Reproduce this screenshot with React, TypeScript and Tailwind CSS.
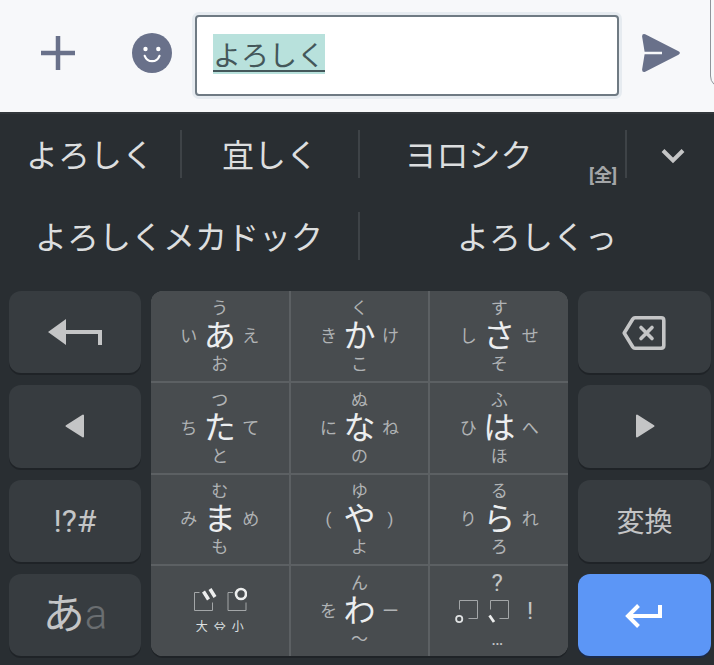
import React, { useEffect, useRef, useState } from 'react';

interface FlickKey {
  main: string;
  up: string;
  left: string;
  right: string;
  down: string;
}

const flickKeys: FlickKey[] = [
  { main: 'あ', up: 'う', left: 'い', right: 'え', down: 'お' },
  { main: 'か', up: 'く', left: 'き', right: 'け', down: 'こ' },
  { main: 'さ', up: 'す', left: 'し', right: 'せ', down: 'そ' },
  { main: 'た', up: 'つ', left: 'ち', right: 'て', down: 'と' },
  { main: 'な', up: 'ぬ', left: 'に', right: 'ね', down: 'の' },
  { main: 'は', up: 'ふ', left: 'ひ', right: 'へ', down: 'ほ' },
  { main: 'ま', up: 'む', left: 'み', right: 'め', down: 'も' },
  { main: 'や', up: 'ゆ', left: '(', right: ')', down: 'よ' },
  { main: 'ら', up: 'る', left: 'り', right: 'れ', down: 'ろ' }
];

const waKey: FlickKey = { main: 'わ', up: 'ん', left: 'を', right: 'ー', down: '〜' };

const cellClass = 'flex items-center justify-center bg-[#484c4f] active:bg-[#55595c]';

const FlickButton: React.FC<{ item: FlickKey }> = ({ item }) => (
  <button type="button" className={cellClass}>
    <span className="grid grid-cols-[26px_36px_26px] grid-rows-[20px_36px_20px] place-items-center text-[17px] leading-5 text-[#b0b3b5]">
      <span className="col-start-2">{item.up}</span>
      <span className="col-start-1 row-start-2">{item.left}</span>
      <span className="row-start-2 text-[32px] leading-9 text-[#eceeef]">{item.main}</span>
      <span className="row-start-2">{item.right}</span>
      <span className="col-start-2 row-start-3">{item.down}</span>
    </span>
  </button>
);

interface SideKeyProps {
  label: string;
  primary?: boolean;
  children: React.ReactNode;
}

const SideKey: React.FC<SideKeyProps> = ({ label, primary, children }) => (
  <button
    type="button"
    aria-label={label}
    className={`flex items-center justify-center rounded-xl ${
      primary
        ? 'bg-[#5c96f6] text-white shadow-[0_2px_0_#1b2b4b]'
        : 'bg-[#373c40] text-[#c4c5c6] shadow-[0_2px_0_#1f2327]'
    }`}
  >
    {children}
  </button>
);

const Divider = () => <span className="h-12 w-0.5 shrink-0 bg-[#3e4347]" />;

const App: React.FC = () => {
  const [message, setMessage] = useState('よろしく');
  const inputRef = useRef<HTMLInputElement>(null);

  // the composing text starts out selected
  useEffect(() => {
    inputRef.current?.focus();
    inputRef.current?.select();
  }, []);

  return (
    <div className="flex min-h-screen flex-col bg-[#292e32] font-['Roboto','Noto_Sans_CJK_JP',sans-serif]">
      <header className="flex h-28 items-start bg-[#f7f8fa] text-[#69718a]">
        <div className="flex flex-1 items-center pt-[15px] pl-10">
          <button type="button" aria-label="追加" className="shrink-0 pb-1.5">
            <svg width="36" height="36" viewBox="0 0 36 36" fill="none" stroke="currentColor" strokeWidth="4.500">
              <path d="M18 1v34M1 18h34" />
            </svg>
          </button>
          <button type="button" aria-label="絵文字" className="ml-14 shrink-0 pb-1.5">
            <svg width="40" height="40" viewBox="0 0 40 40">
              <circle cx="20" cy="20" r="20" fill="currentColor" />
              <circle cx="13.500" cy="16" r="2.200" fill="#fff" />
              <circle cx="26.300" cy="16" r="2.200" fill="#fff" />
              <path d="M12.700 22.800c2.800 7.200 12 7.200 14.800 0" fill="none" stroke="#fff" strokeWidth="2.200" strokeLinecap="round" />
            </svg>
          </button>
          <input
            ref={inputRef}
            type="text"
            aria-label="メッセージ"
            value={message}
            onChange={(e) => setMessage(e.target.value)}
            className="ml-[23px] h-[81px] min-w-0 flex-1 rounded border-2 border-[#6f7a83] bg-white px-4 pb-1 text-[28px] leading-[34px] text-[#44575a] underline decoration-2 underline-offset-4 outline-none ring-3 ring-[#e6ebf0] selection:bg-[#b8e1dc] selection:text-[#44575a]"
          />
          <button type="button" aria-label="送信" className="mr-[30px] ml-[23px] shrink-0 pb-1.5">
            <svg width="38" height="38" viewBox="0 0 38 38" fill="currentColor">
              <path d="M3.200.3 36.500 17.300q2.800 1.700 0 3.400L3.200 37.700Q0 38.600.1 35.500L2.600 20.200H20v-2.400H2.600L.1 2.500Q0-.6 3.200.3z" />
            </svg>
          </button>
        </div>
        <div className="-mt-3 h-[100px] w-1 shrink-0 overflow-hidden">
          <div className="h-full w-6 rounded-xl border border-[#8f949a]" />
        </div>
      </header>

      <section className="border-t-2 border-[#32373b] text-[32px] leading-10 text-[#dcdedf]">
        <div className="grid h-20 grid-cols-[182fr_178fr_267fr_87fr]">
          <div className="flex items-center">
            <button type="button" className="flex-1 pt-1">よろしく</button>
            <Divider />
          </div>
          <div className="flex items-center">
            <button type="button" className="flex-1 pt-1">宜しく</button>
            <Divider />
          </div>
          <div className="flex items-center">
            <button type="button" className="flex h-full flex-1 items-center">
              <span className="flex-1 pt-1 pr-3">ヨロシク</span>
              <span className="self-end pr-2 pb-2 text-lg leading-5 font-bold text-[#a4a6a8]">[全]</span>
            </button>
            <Divider />
          </div>
          <button type="button" aria-label="候補を開く" className="flex items-center justify-center pt-1 pl-1">
            <svg width="24" height="16" viewBox="0 0 24 16" fill="none" stroke="#c4c5c6" strokeWidth="4">
              <path d="M2 2.500 12 12.500 22 2.500" />
            </svg>
          </button>
        </div>
        <div className="grid h-[83px] grid-cols-[360fr_354fr]">
          <div className="flex items-center">
            <button type="button" className="flex-1 pt-1">よろしくメカドック</button>
            <Divider />
          </div>
          <button type="button" className="pt-1">よろしくっ</button>
        </div>
      </section>

      <main className="grid flex-1 grid-cols-[132fr_417fr_133fr] gap-[10px] pt-[14px] pr-[3px] pb-[9px] pl-[9px]">
        <div className="grid grid-rows-4 gap-3">
          <SideKey label="戻す">
            <svg width="54" height="28" viewBox="0 0 54 28" fill="currentColor">
              <path d="M0 14 18 1v11h36v15h-4V16H18v11z" />
            </svg>
          </SideKey>
          <SideKey label="左へ">
            <svg width="20" height="24" viewBox="0 0 20 24" fill="currentColor" stroke="currentColor" strokeWidth="2" strokeLinejoin="round">
              <path d="M1.500 12 18 1.500v21z" />
            </svg>
          </SideKey>
          <SideKey label="記号">
            <span className="text-[32px] leading-9">!?#</span>
          </SideKey>
          <SideKey label="文字切替">
            <span className="text-[42px] leading-[44px]">あ</span>
            <span className="text-[42px] leading-[44px] font-light text-[#6a6e71]">a</span>
          </SideKey>
        </div>

        <div className="grid grid-cols-3 grid-rows-4 gap-0.5 overflow-hidden rounded-xl bg-[#5c6063] shadow-[0_2px_0_#1f2327]">
          {flickKeys.map((item) => (
            <FlickButton key={item.main} item={item} />
          ))}

          <button type="button" className={`${cellClass} flex-col`}>
            <svg width="54" height="24" viewBox="0 0 54 24" fill="none" stroke="#a3a6a8">
              <path d="M6.500 5.500H1.500v18h18v-8M40 5.500h-5v18h18v-8" />
              <path d="m10.500 4.500 5 8M17 2l5 8" stroke="#eceded" strokeWidth="3.500" />
              <circle cx="48" cy="7" r="5" stroke="#eceded" strokeWidth="2.600" />
            </svg>
            <span className="mt-2 flex gap-1.5 text-xs leading-4 text-[#dfe1e2]">
              <span>大</span>
              <span>⇔</span>
              <span>小</span>
            </span>
          </button>

          <FlickButton item={waKey} />

          <button type="button" className={cellClass}>
            <span className="grid grid-cols-[26px_36px_30px] grid-rows-[20px_36px_20px] place-items-center text-2xl leading-5 text-[#c3c5c6]">
              <span className="col-start-2">?</span>
              <svg className="col-span-2 col-start-1 row-start-2" width="62" height="24" viewBox="0 0 62 24" fill="none" stroke="#a3a6a8">
                <path d="M6.500 10.500v-9h18v18h-9M37.500 10.500v-9h18v18h-9" />
                <circle cx="6.200" cy="20" r="3.100" stroke="#dfe1e2" strokeWidth="1.800" />
                <path d="m36.500 16.500 4.500 6.500" stroke="#eceded" strokeWidth="2.800" />
              </svg>
              <span className="row-start-2">!</span>
              <span className="col-start-2 row-start-3 text-lg leading-5">…</span>
            </span>
          </button>
        </div>

        <div className="grid grid-rows-4 gap-3">
          <SideKey label="削除">
            <svg width="46" height="38" viewBox="0 -3 46 38" fill="none" stroke="currentColor" strokeWidth="3.600" strokeLinejoin="round">
              <path d="M13 1.800h26.200q2.600 0 2.600 2.600v25.200q0 2.600-2.600 2.600H13q-1.400 0-2.200-1.200L2.200 17l8.600-14q.8-1.200 2.200-1.200z" />
              <path d="m19 11.500 11 11M30 11.500l-11 11" strokeLinecap="round" />
            </svg>
          </SideKey>
          <SideKey label="右へ">
            <svg width="20" height="24" viewBox="0 0 20 24" fill="currentColor" stroke="currentColor" strokeWidth="2" strokeLinejoin="round">
              <path d="M18.500 12 2 1.500v21z" />
            </svg>
          </SideKey>
          <SideKey label="変換">
            <span className="pt-1 text-[28px] leading-8">変換</span>
          </SideKey>
          <SideKey label="改行" primary>
            <svg width="42" height="26" viewBox="2 0 42 26" fill="none" stroke="currentColor" strokeWidth="4">
              <path d="M38 3v11H6M16.500 3.500 6 14l10.500 10.500" />
            </svg>
          </SideKey>
        </div>
      </main>
    </div>
  );
};

export default App;
